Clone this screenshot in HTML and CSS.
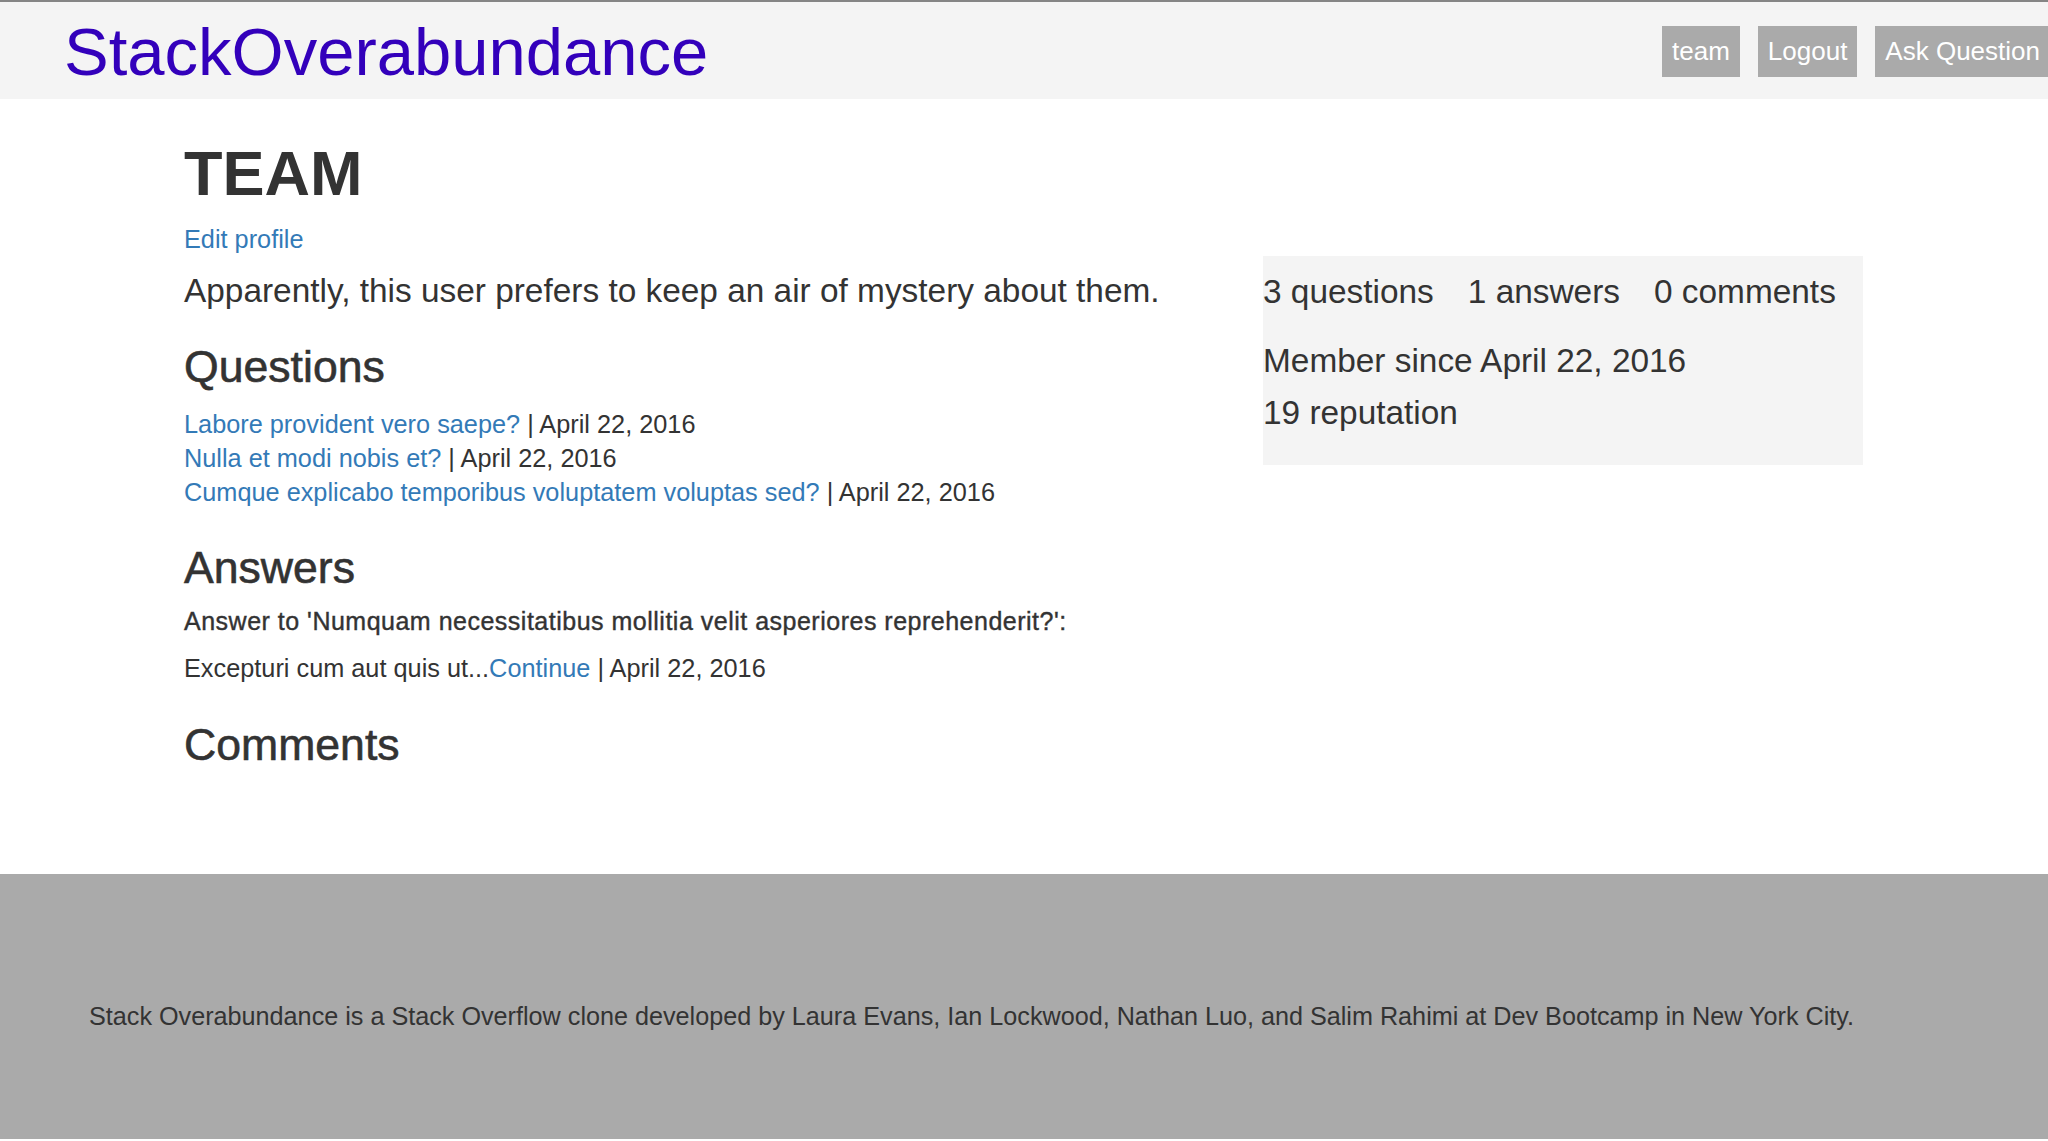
FILE: index.html
```html
<!DOCTYPE html>
<html lang="en">
<head>
<meta charset="utf-8">
<title>StackOverabundance - TEAM</title>
<link rel="stylesheet" href="styles.css">
</head>
<body>
<header class="topbar">
  <a class="logo" href="#">StackOverabundance</a>
  <nav class="nav">
    <a class="nav-btn" href="#">team</a>
    <a class="nav-btn" href="#">Logout</a>
    <a class="nav-btn" href="#">Ask Question</a>
  </nav>
</header>

<main class="page">
  <h1 class="user-name">TEAM</h1>
  <a class="edit-link" href="#">Edit profile</a>
  <div class="profile-row">
    <div class="profile-main">
      <p class="lead">Apparently, this user prefers to keep an air of mystery about them.</p>

      <h3 class="section-title q-title">Questions</h3>
      <ul class="item-list">
        <li><a href="#">Labore provident vero saepe?</a> | April 22, 2016</li>
        <li><a href="#">Nulla et modi nobis et?</a> | April 22, 2016</li>
        <li><a href="#">Cumque explicabo temporibus voluptatem voluptas sed?</a> | April 22, 2016</li>
      </ul>

      <h3 class="section-title a-title">Answers</h3>
      <p class="answer-head">Answer to 'Numquam necessitatibus mollitia velit asperiores reprehenderit?':</p>
      <p class="answer-body">Excepturi cum aut quis ut...<a href="#">Continue</a> | April 22, 2016</p>

      <h3 class="section-title c-title">Comments</h3>
    </div>
    <aside class="stats-box">
      <div class="stats-counts">
        <span>3 questions</span>
        <span>1 answers</span>
        <span>0 comments</span>
      </div>
      <p class="stats-line member">Member since April 22, 2016</p>
      <p class="stats-line">19 reputation</p>
    </aside>
  </div>
</main>

<footer class="footer">
  <p>Stack Overabundance is a Stack Overflow clone developed by Laura Evans, Ian Lockwood, Nathan Luo, and Salim Rahimi at Dev Bootcamp in New York City.</p>
</footer>
</body>
</html>
```

FILE: styles.css
```css
* { box-sizing: border-box; }

html, body {
  margin: 0;
  padding: 0;
}

body {
  font-family: "Liberation Sans", Arial, Helvetica, sans-serif;
  color: #333;
  background: #fff;
  font-size: 25px;
  line-height: 35px;
}

a { color: #337ab7; text-decoration: none; }

p { margin: 0; }

/* Header */
.topbar {
  display: flex;
  align-items: center;
  justify-content: space-between;
  height: 99px;
  background: #f4f4f4;
  border-top: 2px solid #858585;
  padding-left: 64px;
}

.logo {
  color: #3300bb;
  font-size: 67px;
  line-height: 70px;
  margin-top: 2px;
}

.nav {
  display: flex;
  gap: 18px;
  align-self: flex-start;
  margin-top: 24px;
  margin-right: -2px;
}

.nav-btn {
  display: block;
  background: #aaa;
  color: #fff;
  font-size: 26px;
  line-height: 35px;
  padding: 8px 10px;
}

/* Main */
.page {
  padding: 39px 0 0 184px;
  min-height: 775px;
}

.user-name {
  margin: 0;
  font-size: 63px;
  line-height: 70px;
  font-weight: bold;
}

.edit-link {
  display: block;
  width: max-content;
  margin-top: 14px;
  font-size: 25.3px;
}

.profile-row {
  display: flex;
  align-items: flex-start;
  margin-top: -1px;
}

.profile-main {
  width: 1079px;
}

.lead {
  font-size: 33.4px;
  line-height: 45px;
  margin-top: 12px;
}

.section-title {
  margin: 0;
  font-size: 44.6px;
  line-height: 46px;
  font-weight: normal;
  -webkit-text-stroke: 0.6px #333;
}

.q-title { margin-top: 31px; }
.a-title { margin-top: 36px; }
.c-title { margin-top: 36px; }

.item-list {
  list-style: none;
  margin: 17px 0 0;
  padding: 0;
  line-height: 34px;
  font-size: 25.3px;
}

.answer-head {
  margin-top: 13px;
  letter-spacing: 0.5px;
  -webkit-text-stroke: 0.4px #333;
}

.answer-body {
  margin-top: 12px;
  font-size: 25.3px;
}

.stats-box {
  width: 600px;
  background: #f4f4f4;
  padding: 13px 0 26px;
  font-size: 33.4px;
}

.stats-counts {
  display: flex;
  gap: 34px;
  line-height: 45px;
}

.stats-line {
  line-height: 52px;
}

.member { margin-top: 21px; }

/* Footer */
.footer {
  background: #aaa;
  height: 265px;
  padding: 125px 89px 0;
  margin-bottom: 3px;
  font-size: 25.2px;
}
```
